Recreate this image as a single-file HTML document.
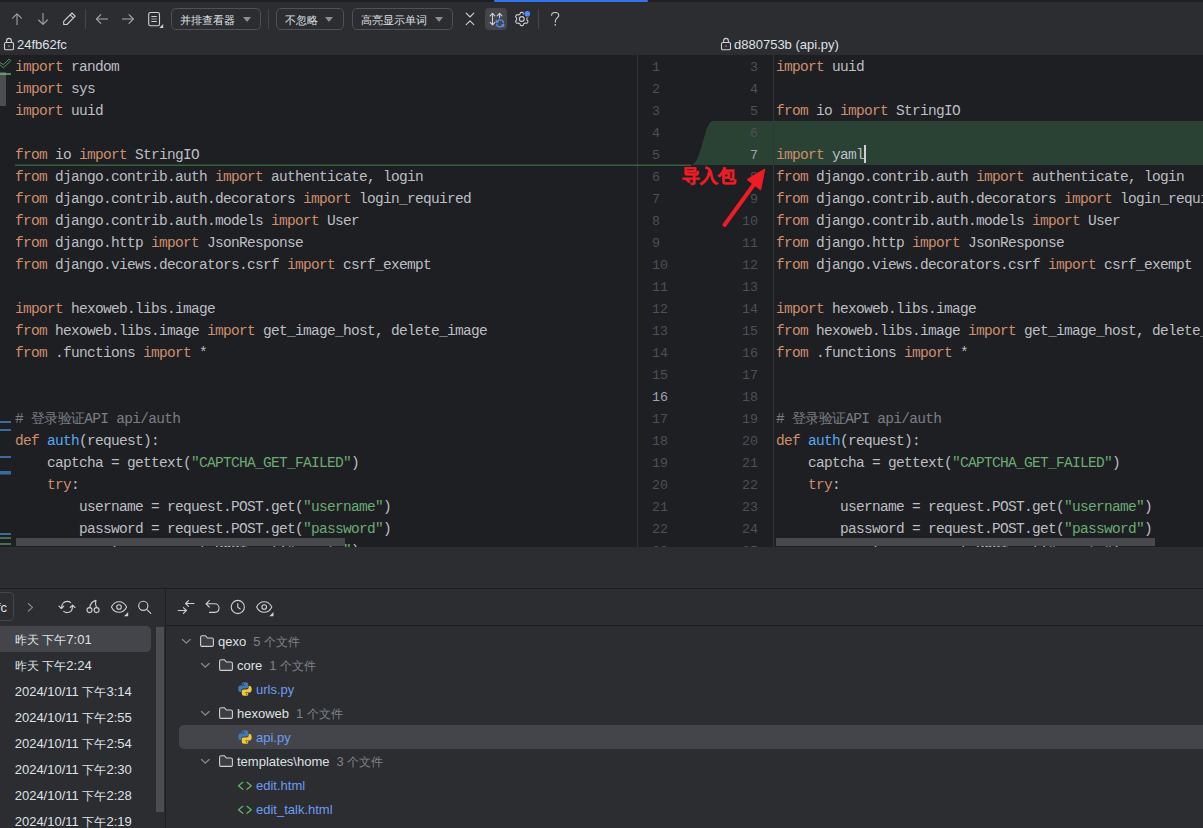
<!DOCTYPE html>
<html><head><meta charset="utf-8">
<style>
*{margin:0;padding:0;box-sizing:border-box}
html,body{width:1203px;height:828px;overflow:hidden;background:#2B2D30;font-family:"Liberation Sans",sans-serif;color:#DFE1E5;position:relative}
.a{position:absolute}
.code{position:absolute;font-family:"Liberation Mono",monospace;font-size:14.5px;letter-spacing:-0.7px;line-height:22px;white-space:pre;color:#BCBEC4}
.cjc{color:#7A7E85;font-size:13.7px;line-height:10px}
.k{color:#CF8E6D}.s{color:#6AAB73}.c{color:#7A7E85}.f{color:#56A8F5}
.lnl,.lnr{position:absolute;font-family:"Liberation Mono",monospace;font-size:13.333px;line-height:22px;color:#4B5059;white-space:pre}
.lnl{left:652px}
.lnr{right:445px;text-align:right}
.cur{color:#A1A3AB}
.dd{position:absolute;top:8px;height:22px;border:1px solid #4E5157;border-radius:5px}
.dd span{position:absolute;left:8px;top:4px;font-size:11.2px;color:#DFE1E5;white-space:nowrap}
.tri{position:absolute;top:8px;width:0;height:0;border-left:4.3px solid transparent;border-right:4.3px solid transparent;border-top:5px solid #8C8F94}
svg{position:absolute;overflow:visible}
.t13{position:absolute;font-size:13px;white-space:nowrap;line-height:16px}
.row{position:absolute;left:14.7px;font-size:13px;white-space:nowrap;color:#DFE1E5;line-height:16px}
.tr{position:absolute;font-size:13px;white-space:nowrap;color:#DFE1E5;line-height:16px}
.cnt{color:#7E8289;margin-left:7px}
.cj{font-size:12px}
.mod{color:#6C9CF5}
</style></head><body>
<div class="a" style="left:0;top:0;width:1203px;height:1.5px;background:#1E1F22"></div>
<div class="a" style="left:494px;top:0;width:154px;height:2px;background:#3574F0;border-radius:1px"></div>

<div class="dd" style="left:171px;width:90px"><span>并排查看器</span><div class="tri" style="left:70.5px"></div></div>
<div class="dd" style="left:276px;width:68px"><span>不忽略</span><div class="tri" style="left:47.5px"></div></div>
<div class="dd" style="left:352px;width:101px"><span>高亮显示单词</span><div class="tri" style="left:81.5px"></div></div>

<div class="t13" style="left:17px;top:37px">24fb62fc</div>
<div class="t13" style="left:734px;top:37px">d880753b (api.py)</div>

<!-- editor -->
<div class="a" style="left:0;top:55px;width:1203px;height:492px;background:#1E1F22;overflow:hidden">
  <div class="a" style="left:713px;top:66px;width:490px;height:44px;background:#294233"></div>
  <div class="a" style="left:637px;top:0;width:1px;height:493px;background:#313438"></div>
  <div class="a" style="left:773px;top:0;width:1px;height:493px;background:#313438"></div>
  <div class="code" style="left:15px;top:1px"><span class="k">import</span> random
<span class="k">import</span> sys
<span class="k">import</span> uuid

<span class="k">from</span> io <span class="k">import</span> StringIO
<span class="k">from</span> django.contrib.auth <span class="k">import</span> authenticate, login
<span class="k">from</span> django.contrib.auth.decorators <span class="k">import</span> login_required
<span class="k">from</span> django.contrib.auth.models <span class="k">import</span> User
<span class="k">from</span> django.http <span class="k">import</span> JsonResponse
<span class="k">from</span> django.views.decorators.csrf <span class="k">import</span> csrf_exempt

<span class="k">import</span> hexoweb.libs.image
<span class="k">from</span> hexoweb.libs.image <span class="k">import</span> get_image_host, delete_image
<span class="k">from</span> .functions <span class="k">import</span> *


<span class="c"># </span><span class="cjc">登录验证</span><span class="c">API api/auth</span>
<span class="k">def</span> <span class="f">auth</span>(request):
    captcha = gettext(<span class="s">&quot;CAPTCHA_GET_FAILED&quot;</span>)
    <span class="k">try</span>:
        username = request.POST.get(<span class="s">&quot;username&quot;</span>)
        password = request.POST.get(<span class="s">&quot;password&quot;</span>)
        verify = request.POST.get(<span class="s">&quot;verify&quot;</span>)</div>
  <div class="code" style="left:776px;top:1px"><span class="k">import</span> uuid

<span class="k">from</span> io <span class="k">import</span> StringIO

<span class="k">import</span> yaml
<span class="k">from</span> django.contrib.auth <span class="k">import</span> authenticate, login
<span class="k">from</span> django.contrib.auth.decorators <span class="k">import</span> login_required
<span class="k">from</span> django.contrib.auth.models <span class="k">import</span> User
<span class="k">from</span> django.http <span class="k">import</span> JsonResponse
<span class="k">from</span> django.views.decorators.csrf <span class="k">import</span> csrf_exempt

<span class="k">import</span> hexoweb.libs.image
<span class="k">from</span> hexoweb.libs.image <span class="k">import</span> get_image_host, delete_image
<span class="k">from</span> .functions <span class="k">import</span> *


<span class="c"># </span><span class="cjc">登录验证</span><span class="c">API api/auth</span>
<span class="k">def</span> <span class="f">auth</span>(request):
    captcha = gettext(<span class="s">&quot;CAPTCHA_GET_FAILED&quot;</span>)
    <span class="k">try</span>:
        username = request.POST.get(<span class="s">&quot;username&quot;</span>)
        password = request.POST.get(<span class="s">&quot;password&quot;</span>)
        verify = request.POST.get(<span class="s">&quot;verify&quot;</span>)</div>
</div>
<svg width="1203" height="828" style="left:0;top:0" viewBox="0 0 1203 828" fill="none"> <!-- diff connector -->
 <path d="M713.5 121H773V165H690C698 165 700 150 704 138C707 127 709 121 713.5 121Z" fill="#294233"/>
 <rect x="15" y="164.5" width="676" height="1.5" fill="#35603F"/>
</svg>
<div class="a" style="left:0;top:0;width:1203px;height:547px;overflow:hidden"><div style="top:57px" class="lnl">1</div><div style="top:79px" class="lnl">2</div><div style="top:101px" class="lnl">3</div><div style="top:123px" class="lnl">4</div><div style="top:145px" class="lnl">5</div><div style="top:167px" class="lnl">6</div><div style="top:189px" class="lnl">7</div><div style="top:211px" class="lnl">8</div><div style="top:233px" class="lnl">9</div><div style="top:255px" class="lnl">10</div><div style="top:277px" class="lnl">11</div><div style="top:299px" class="lnl">12</div><div style="top:321px" class="lnl">13</div><div style="top:343px" class="lnl">14</div><div style="top:365px" class="lnl">15</div><div style="top:387px" class="lnl cur">16</div><div style="top:409px" class="lnl">17</div><div style="top:431px" class="lnl">18</div><div style="top:453px" class="lnl">19</div><div style="top:475px" class="lnl">20</div><div style="top:497px" class="lnl">21</div><div style="top:519px" class="lnl">22</div><div style="top:541px" class="lnl">23</div><div style="top:57px" class="lnr">3</div><div style="top:79px" class="lnr">4</div><div style="top:101px" class="lnr">5</div><div style="top:123px" class="lnr">6</div><div style="top:145px" class="lnr cur">7</div><div style="top:167px" class="lnr">8</div><div style="top:189px" class="lnr">9</div><div style="top:211px" class="lnr">10</div><div style="top:233px" class="lnr">11</div><div style="top:255px" class="lnr">12</div><div style="top:277px" class="lnr">13</div><div style="top:299px" class="lnr">14</div><div style="top:321px" class="lnr">15</div><div style="top:343px" class="lnr">16</div><div style="top:365px" class="lnr">17</div><div style="top:387px" class="lnr">18</div><div style="top:409px" class="lnr">19</div><div style="top:431px" class="lnr">20</div><div style="top:453px" class="lnr">21</div><div style="top:475px" class="lnr">22</div><div style="top:497px" class="lnr">23</div><div style="top:519px" class="lnr">24</div><div style="top:541px" class="lnr">25</div></div>
<div class="a" style="left:864px;top:145px;width:1.5px;height:18px;background:#CED0D6"></div>

<div class="a" style="left:0;top:588px;width:1203px;height:1px;background:#1E1F22"></div>
<div class="a" style="left:165px;top:589px;width:1px;height:239px;background:#1E1F22"></div>
<div class="a" style="left:166px;top:625px;width:1037px;height:1px;background:#1E1F22"></div>

<div class="a" style="left:682px;top:165px;font-size:17.5px;font-weight:bold;color:#EE1C25;-webkit-text-stroke:0.4px #EE1C25;white-space:nowrap;line-height:22px">导入包</div>

<!-- bottom left -->
<div class="a" style="left:-20px;top:592px;width:34px;height:29px;border:1px solid #43454A;border-radius:4px"></div>
<div class="a" style="left:-3px;top:600px;font-size:13px;line-height:16px;color:#DFE1E5">fc</div>
<div class="a" style="left:0;top:626px;width:151px;height:26px;background:#43454A;border-radius:0 5px 5px 0"></div>
<div class="a" style="left:156px;top:627px;width:8px;height:185px;background:#4B4D50"></div>
<div class="row" style="top:632px"><span class="cj">昨天</span> <span class="cj">下午</span>7:01</div>
<div class="row" style="top:658px"><span class="cj">昨天</span> <span class="cj">下午</span>2:24</div>
<div class="row" style="top:684px">2024/10/11 <span class="cj">下午</span>3:14</div>
<div class="row" style="top:710px">2024/10/11 <span class="cj">下午</span>2:55</div>
<div class="row" style="top:736px">2024/10/11 <span class="cj">下午</span>2:54</div>
<div class="row" style="top:762px">2024/10/11 <span class="cj">下午</span>2:30</div>
<div class="row" style="top:788px">2024/10/11 <span class="cj">下午</span>2:28</div>
<div class="row" style="top:814px">2024/10/11 <span class="cj">下午</span>2:19</div>

<!-- tree -->
<div class="a" style="left:178.5px;top:725px;width:1030px;height:24px;background:#43454A;border-radius:5px"></div>
<div class="tr" style="left:218px;top:634px">qexo<span class="cnt">5 <span class="cj">个文件</span></span></div>
<div class="tr" style="left:237px;top:658px">core<span class="cnt">1 <span class="cj">个文件</span></span></div>
<div class="tr mod" style="left:256px;top:682px">urls.py</div>
<div class="tr" style="left:237px;top:706px">hexoweb<span class="cnt">1 <span class="cj">个文件</span></span></div>
<div class="tr mod" style="left:256px;top:730px">api.py</div>
<div class="tr" style="left:237px;top:754px">templates\home<span class="cnt">3 <span class="cj">个文件</span></span></div>
<div class="tr mod" style="left:256px;top:778px">edit.html</div>
<div class="tr mod" style="left:256px;top:802px">edit_talk.html</div>

<svg width="1203" height="828" style="left:0;top:0" viewBox="0 0 1203 828" fill="none">
 <!-- up/down -->
 <g stroke="#85888D" stroke-width="1.4">
  <path d="M17 14.2V25"/><path d="M43 13V24"/><path d="M97.2 19H108"/><path d="M122 19H132.8"/>
 </g>
 <g stroke="#A3A6AB" stroke-width="1.1" stroke-linecap="round" stroke-linejoin="round">
  <path d="M12.6 18.2L17 13.8L21.4 18.2"/>
  <path d="M38.6 20L43 24.4L47.4 20"/>
  <path d="M100.8 14.6L96.4 19L100.8 23.4"/>
  <path d="M129 14.6L133.4 19L129 23.4"/>
 </g>
 <path d="M63.7 21.3V24.5H66.9L75.2 16.2L72 13Z M70.2 14.8L73.4 18" stroke="#CED0D6" stroke-width="1.1" stroke-linejoin="round"/>
 <rect x="85" y="9" width="1" height="20" fill="#43454A"/>
 <rect x="148.7" y="12.5" width="10.8" height="13.2" rx="1.8" stroke="#CED0D6" stroke-width="1.1"/>
 <path d="M151.3 16.5H156.8M151.3 21.5H156.8" stroke="#CED0D6" stroke-width="1"/>
 <path d="M151.3 19H156.8" stroke="#8C8F94" stroke-width="1.2"/>
 <path d="M159.3 28L163.2 24V28Z" fill="#CED0D6"/>
 <rect x="268" y="9" width="1" height="20" fill="#43454A"/>
 <!-- collapse -->
 <path d="M466.2 13.2L470 17L473.8 13.2M466.2 24.6L470 20.8L473.8 24.6" stroke="#CED0D6" stroke-width="1.1" stroke-linecap="round" stroke-linejoin="round"/>
 <rect x="485" y="8" width="22" height="22" rx="4" fill="#43454A"/>
 <path d="M492.5 13.6V24.4M490.1 15.8L492.5 13.4L494.9 15.8M490.1 22.4L492.5 24.8L494.9 22.4M499.6 13.6V17.8M497.2 15.8L499.6 13.4L502 15.8" stroke="#CED0D6" stroke-width="1.1" stroke-linecap="round" stroke-linejoin="round"/>
 <path d="M496.7 22.4A3.5 3.5 0 0 1 503.5 22.6M503.4 24.4A3.5 3.5 0 0 1 496.6 24.1" stroke="#548AF7" stroke-width="1.2" stroke-linecap="round"/>
 <path d="M496 19.8L498.8 21.9L496 22.8Z M504 27L501.2 25L504 24.1Z" fill="#548AF7" stroke="#548AF7" stroke-width="0.6" stroke-linejoin="round"/>
 <!-- gear -->
 <g transform="translate(521.8 19)">
  <path d="M5.15 0.00L5.15 0.22L5.14 0.45L5.14 0.68L5.18 0.91L5.34 1.18L5.70 1.53L6.04 1.90L6.15 2.24L6.11 2.53L6.02 2.81L5.90 3.07L5.76 3.32L5.61 3.57L5.44 3.81L5.25 4.03L5.01 4.21L4.67 4.28L4.17 4.17L3.69 4.03L3.38 4.03L3.16 4.11L2.96 4.23L2.77 4.35L2.58 4.46L2.38 4.57L2.18 4.68L1.98 4.79L1.80 4.94L1.64 5.21L1.53 5.70L1.37 6.18L1.14 6.45L0.86 6.56L0.58 6.62L0.29 6.64L0.00 6.65L-0.29 6.64L-0.58 6.62L-0.86 6.56L-1.14 6.45L-1.37 6.18L-1.53 5.70L-1.64 5.21L-1.80 4.94L-1.98 4.79L-2.18 4.68L-2.38 4.57L-2.57 4.46L-2.77 4.35L-2.96 4.23L-3.16 4.11L-3.38 4.03L-3.69 4.03L-4.17 4.17L-4.67 4.28L-5.01 4.21L-5.25 4.03L-5.44 3.81L-5.61 3.57L-5.76 3.33L-5.90 3.07L-6.02 2.81L-6.11 2.53L-6.15 2.24L-6.04 1.90L-5.70 1.53L-5.34 1.18L-5.18 0.91L-5.14 0.68L-5.14 0.45L-5.15 0.22L-5.15 0.00L-5.15 -0.22L-5.14 -0.45L-5.14 -0.68L-5.18 -0.91L-5.34 -1.18L-5.70 -1.53L-6.04 -1.90L-6.15 -2.24L-6.11 -2.53L-6.02 -2.81L-5.90 -3.07L-5.76 -3.33L-5.61 -3.57L-5.44 -3.81L-5.25 -4.03L-5.01 -4.21L-4.67 -4.28L-4.17 -4.17L-3.69 -4.03L-3.38 -4.03L-3.16 -4.11L-2.96 -4.23L-2.77 -4.35L-2.58 -4.46L-2.38 -4.57L-2.18 -4.68L-1.98 -4.79L-1.80 -4.94L-1.64 -5.21L-1.53 -5.70L-1.37 -6.18L-1.14 -6.45L-0.86 -6.56L-0.58 -6.62L-0.29 -6.64L-0.00 -6.65L0.29 -6.64L0.58 -6.62L0.86 -6.56L1.14 -6.45L1.37 -6.18L1.53 -5.70L1.64 -5.21L1.80 -4.94L1.98 -4.79L2.18 -4.68L2.38 -4.57L2.57 -4.46L2.77 -4.35L2.96 -4.23L3.16 -4.11L3.38 -4.03L3.69 -4.03L4.17 -4.17L4.67 -4.28L5.01 -4.21L5.25 -4.03L5.44 -3.81L5.61 -3.57L5.76 -3.32L5.90 -3.07L6.02 -2.81L6.11 -2.53L6.15 -2.24L6.04 -1.90L5.70 -1.53L5.34 -1.18L5.18 -0.91L5.14 -0.68L5.14 -0.45L5.15 -0.22Z" stroke="#CED0D6" stroke-width="1.1" stroke-linejoin="round"/>
  <circle r="2.4" stroke="#CED0D6" stroke-width="1.1"/>
 </g>
 <circle cx="527.3" cy="13.8" r="3.6" fill="#2B2D30"/>
 <circle cx="527.3" cy="13.8" r="2.8" fill="#548AF7"/>
 <rect x="538" y="9" width="1" height="20" fill="#43454A"/>
 <path d="M551.6 15.3C551.6 13.5 553.1 12.5 555.2 12.5C557.3 12.5 558.8 13.7 558.8 15.5C558.8 17.6 555.3 18.4 555.3 21.2V22" stroke="#CED0D6" stroke-width="1.1" stroke-linecap="round"/>
 <circle cx="555.3" cy="24.9" r="0.8" fill="#CED0D6"/>
 <!-- locks -->
 <g stroke="#CED0D6" stroke-width="1.1">
  <rect x="4.5" y="42.5" width="9" height="7.3" rx="1.3"/>
  <path d="M6.6 42.5V41C6.6 39.4 7.7 38.4 9 38.4C10.3 38.4 11.4 39.4 11.4 41V42.5"/>
  <rect x="721.5" y="42.5" width="9" height="7.3" rx="1.3"/>
  <path d="M723.6 42.5V41C723.6 39.4 724.7 38.4 726 38.4C727.3 38.4 728.4 39.4 728.4 41V42.5"/>
 </g>
 <rect x="8.3" y="45.3" width="1.4" height="1.6" fill="#8C8F94"/>
 <rect x="725.3" y="45.3" width="1.4" height="1.6" fill="#8C8F94"/>


 <!-- bottom icons -->
 <path d="M28.3 603.5L32.5 607.3L28.3 611.1" stroke="#8C8F94" stroke-width="1.1" stroke-linecap="round" stroke-linejoin="round"/>
 <g stroke="#CED0D6" stroke-width="1.1" stroke-linecap="round" stroke-linejoin="round">
  <path d="M70.6 602.6C69 601 65.2 600.8 63.2 603C61.8 604.5 61.4 606.4 61.4 608.2M63.7 611.4C65.5 613 69.5 613.1 71.3 610.9C72.4 609.4 72.6 607.6 72.6 605.6"/>
  <path d="M59 606.1L61.4 608.5L63.8 606.1M70.2 607.5L72.6 605.1L75 607.5"/>
  <circle cx="89.5" cy="610.1" r="2.5"/><circle cx="96.6" cy="610.1" r="2.5"/>
  <path d="M89.8 607.6C90.3 604 92.5 601.2 96 600.4C95.2 602.5 95.4 605.5 96.6 607.6"/>
  <path d="M111.4 607C113 603.6 115.7 601.7 119 601.7C122.3 601.7 125 603.6 126.6 607C125 610.4 122.3 612.3 119 612.3C115.7 612.3 113 610.4 111.4 607Z"/>
  <circle cx="119" cy="607" r="2.3"/>
  <circle cx="143.3" cy="605.8" r="4.6"/>
  <path d="M146.7 609.3L150.8 613.3"/>
  <path d="M185.7 603.5H194M188.5 600.6L185.6 603.5L188.5 606.4M178.2 610.5H186.4M183.4 607.6L186.4 610.5L183.4 613.4"/>
  <path d="M206 603.8H214.9C217.3 603.8 219 605.8 219 608.1C219 610.5 217.3 612.4 214.9 612.4H209.5M209.3 600.6L206 603.8L209.3 607"/>
  <circle cx="237.8" cy="607" r="6.6"/>
  <path d="M237.8 603.6V607.3L240.2 609"/>
  <path d="M256.6 607C258.2 603.6 260.9 601.7 264.2 601.7C267.5 601.7 270.2 603.6 271.8 607C270.2 610.4 267.5 612.3 264.2 612.3C260.9 612.3 258.2 610.4 256.6 607Z"/>
  <circle cx="264.2" cy="607" r="2.3"/>
 </g>
 <path d="M124 616.2L128.2 612V616.2Z" fill="#CED0D6"/>
 <path d="M269.3 616.2L273.5 612V616.2Z" fill="#CED0D6"/>
 <!-- tree icons -->
 <g stroke="#8C8F94" stroke-width="1.1" stroke-linecap="round" stroke-linejoin="round">
  <path d="M182.5 639.5L186.3 643.2L190.1 639.5"/>
  <path d="M201.5 663.5L205.3 667.2L209.1 663.5"/>
  <path d="M201.5 711.5L205.3 715.2L209.1 711.5"/>
  <path d="M201.5 759.5L205.3 763.2L209.1 759.5"/>
 </g>
 <g stroke="#CED0D6" stroke-width="1.1" fill="#3C3E42" stroke-linejoin="round">
  <path d="M200.6 637.1999999999999Q200.6 635.8 202.0 635.8H205.5L207.4 638.0H212.0Q213.4 638.0 213.4 639.4V645.0Q213.4 646.4 212.0 646.4H202.0Q200.6 646.4 200.6 645.0Z"/>
  <path d="M219.6 661.1999999999999Q219.6 659.8 221.0 659.8H224.5L226.4 662.0H231.0Q232.4 662.0 232.4 663.4V669.0Q232.4 670.4 231.0 670.4H221.0Q219.6 670.4 219.6 669.0Z"/>
  <path d="M219.6 709.1999999999999Q219.6 707.8 221.0 707.8H224.5L226.4 710.0H231.0Q232.4 710.0 232.4 711.4V717.0Q232.4 718.4 231.0 718.4H221.0Q219.6 718.4 219.6 717.0Z"/>
  <path d="M219.6 757.1999999999999Q219.6 755.8 221.0 755.8H224.5L226.4 758.0H231.0Q232.4 758.0 232.4 759.4V765.0Q232.4 766.4 231.0 766.4H221.0Q219.6 766.4 219.6 765.0Z"/>
 </g>
 <g stroke="#5FB865" stroke-width="1.2" stroke-linecap="round" stroke-linejoin="round">
  <path d="M242.8 782.3L238.5 785.8L242.8 789.3M247 782.3L251.3 785.8L247 789.3"/>
  <path d="M242.8 806.3L238.5 809.8L242.8 813.3M247 806.3L251.3 809.8L247 813.3"/>
 </g>
 <g id="py1" transform="translate(238 682)">
  <path d="M6.8 0.2C3.6 0.2 3.8 1.6 3.8 1.6V3.1H6.9V3.6H2.5C2.5 3.6 0.3 3.3 0.3 6.8C0.3 10.2 2.2 10.1 2.2 10.1H3.4V8.4C3.4 8.4 3.3 6.5 5.3 6.5H8.4C8.4 6.5 10.2 6.6 10.2 4.7V1.9C10.2 1.9 10.5 0.2 6.8 0.2Z" fill="#3D7BB5"/>
  <path d="M7.2 13.8C10.4 13.8 10.2 12.4 10.2 12.4V10.9H7.1V10.4H11.5C11.5 10.4 13.7 10.7 13.7 7.2C13.7 3.8 11.8 3.9 11.8 3.9H10.6V5.6C10.6 5.6 10.7 7.5 8.7 7.5H5.6C5.6 7.5 3.8 7.4 3.8 9.3V12.1C3.8 12.1 3.5 13.8 7.2 13.8Z" fill="#F2C83A"/>
  <circle cx="5.3" cy="1.9" r="0.6" fill="#1E1F22"/><circle cx="8.7" cy="12.1" r="0.6" fill="#1E1F22"/>
 </g>
 <use href="#py1" transform="translate(0 48)"/>
 <!-- left gutter -->
 <path d="M-0.5 62.3L3.5 64.6L9.1 59L10.8 60.6L3.5 67.8L-0.5 64.4" stroke="#57A064" stroke-width="0.9" stroke-linejoin="round"/>
 <rect x="0" y="72" width="6" height="34" fill="#4B4D50"/>
 <rect x="6" y="73" width="5" height="2" fill="#4F8A5C"/>
 <rect x="0" y="73" width="6" height="2" fill="#6E9577"/>
 <rect x="0" y="421" width="11" height="2" fill="#3B6A9C"/>
 <rect x="0" y="429" width="11" height="2" fill="#3B6A9C"/>
 <rect x="0" y="456" width="11" height="2" fill="#3B6A9C"/>
 <rect x="0" y="471" width="11" height="3.5" fill="#3B6A9C"/>
 <rect x="0" y="533" width="11" height="2" fill="#3B6A9C"/>
 <rect x="0" y="537" width="11" height="2" fill="#447152"/>
 <rect x="0" y="543" width="11" height="2" fill="#447152"/>
 <!-- h scrollbars -->
 <rect x="16" y="538" width="329" height="8" fill="#48494C"/>
 <rect x="776" y="538" width="379" height="8" fill="#48494C"/>
 <!-- annotation -->
 <path d="M724.5 225L755 183" stroke="#EE1C25" stroke-width="4" stroke-linecap="round"/>
 <path d="M764.8 169L747 179.5L760.6 190Z" fill="#EE1C25" stroke="#EE1C25" stroke-width="1" stroke-linejoin="round"/>
</svg>
</body></html>
